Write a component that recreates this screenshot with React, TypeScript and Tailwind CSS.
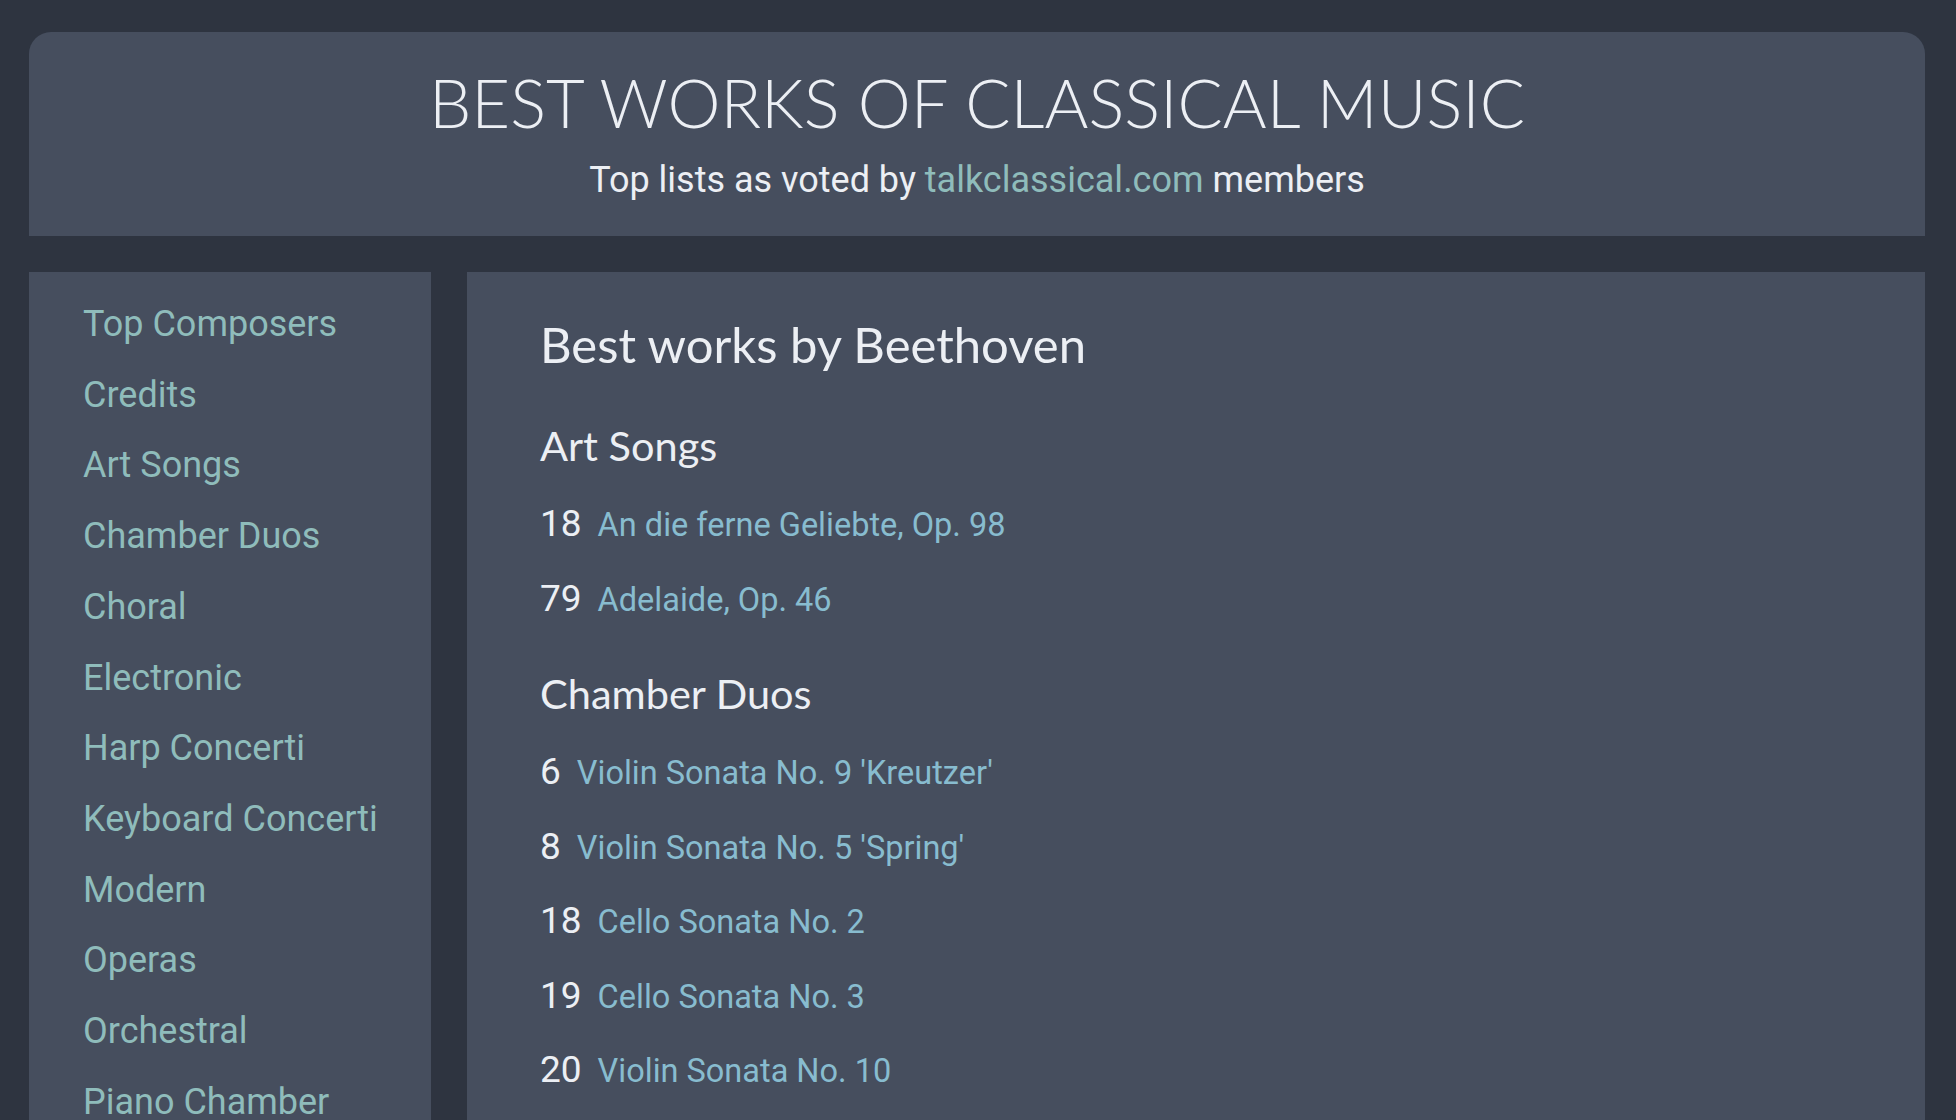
const sideLinks = [
  "Top Composers",
  "Credits",
  "Art Songs",
  "Chamber Duos",
  "Choral",
  "Electronic",
  "Harp Concerti",
  "Keyboard Concerti",
  "Modern",
  "Operas",
  "Orchestral",
  "Piano Chamber",
];

const sections: { title: string; works: [number, string][] }[] = [
  {
    title: "Art Songs",
    works: [
      [18, "An die ferne Geliebte, Op. 98"],
      [79, "Adelaide, Op. 46"],
    ],
  },
  {
    title: "Chamber Duos",
    works: [
      [6, "Violin Sonata No. 9 'Kreutzer'"],
      [8, "Violin Sonata No. 5 'Spring'"],
      [18, "Cello Sonata No. 2"],
      [19, "Cello Sonata No. 3"],
      [20, "Violin Sonata No. 10"],
    ],
  },
];

const heading = "font-['Lato',sans-serif]";
const body = "font-['Roboto',sans-serif]";

export default function App() {
  return (
    <div className="min-h-screen bg-[#2e3440] pl-[29px] pr-[31px] pt-[32px]">
      <header className="flex h-[204px] flex-col items-center rounded-t-[22px] bg-[#464e5e] pt-[30px]">
        <h1 className={`${heading} text-[67px] font-light leading-[80px] text-[#eceff4]`}>
          BEST WORKS OF CLASSICAL MUSIC
        </h1>
        <p className={`${body} mt-[18px] text-[36px] leading-[40px] text-[#eceff4]`}>
          Top lists as voted by <a className="text-[#8fbcbb]">talkclassical.com</a> members
        </p>
      </header>

      <div className="mt-[36px] flex gap-[36px]">
        <nav className="flex w-[402px] shrink-0 flex-col bg-[#464e5e] pb-[40px] pl-[54px] pr-[20px] pt-[17px]">
          {sideLinks.map((l) => (
            <a key={l} className={`${body} whitespace-nowrap text-[36px] leading-[70.7px] text-[#8fbcbb]`}>
              {l}
            </a>
          ))}
        </nav>

        <main className="flex-1 bg-[#464e5e] px-[73px] pb-[40px] pt-[37px]">
          <h2 className={`${heading} pb-[9px] text-[49px] leading-[70px] text-[#eceff4]`}>Best works by Beethoven</h2>
          {sections.map((s) => (
            <section key={s.title} className="mt-[25px]">
              <h3 className={`${heading} text-[41.5px] leading-[64px] text-[#eceff4]`}>{s.title}</h3>
              <ul className="mt-[10px]">
                {s.works.map(([n, w]) => (
                  <li key={w} className={`${body} flex h-[74.5px] items-baseline gap-[16px] leading-[74.5px]`}>
                    <span className="text-[37px] text-[#eceff4]">{n}</span>
                    <a className="text-[32.5px] text-[#88bccf]">{w}</a>
                  </li>
                ))}
              </ul>
            </section>
          ))}
        </main>
      </div>
    </div>
  );
}
